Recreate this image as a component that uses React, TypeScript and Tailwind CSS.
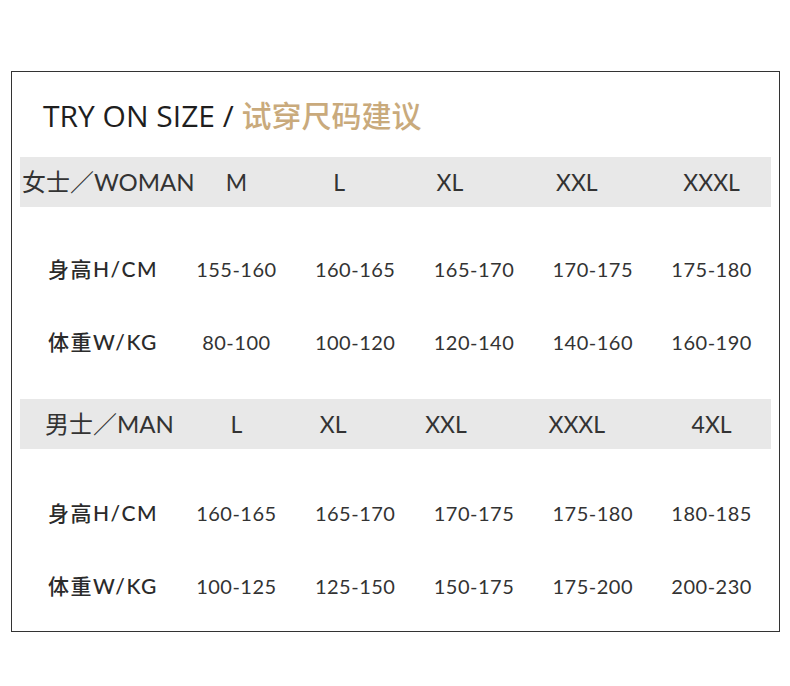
import React from 'react';

type Cell = { t: string; c?: string };

const womanHead: Cell[] = [
  { t: 'M' },
  { t: 'L', c: 'pr-8' },
  { t: 'XL', c: 'pr-12' },
  { t: 'XXL', c: 'pr-8' },
  { t: 'XXXL' },
];

const manHead: Cell[] = [
  { t: 'L' },
  { t: 'XL', c: 'pr-11' },
  { t: 'XXL', c: 'pr-14' },
  { t: 'XXXL', c: 'pr-8' },
  { t: '4XL' },
];

const womanRows = [
  { label: '身高H/CM', values: ['155-160', '160-165', '165-170', '170-175', '175-180'] },
  { label: '体重W/KG', values: ['80-100', '100-120', '120-140', '140-160', '160-190'] },
];

const manRows = [
  { label: '身高H/CM', values: ['160-165', '165-170', '170-175', '175-180', '180-185'] },
  { label: '体重W/KG', values: ['100-125', '125-150', '150-175', '175-200', '200-230'] },
];

const font = "font-['Lato','Noto_Sans_CJK_SC',sans-serif]";

function HeadBar({ label, labelPad, cells }: { label: string; labelPad: string; cells: Cell[] }) {
  return (
    <div className="grid h-[50px] grid-cols-[157px_repeat(5,1fr)] items-center bg-[#e8e8e8] text-[#333]">
      <div className={`whitespace-nowrap text-[24px] ${labelPad}`}>{label}</div>
      {cells.map((cell, i) => (
        <div key={i} className={`text-center text-[23px] ${cell.c ?? ''}`}>
          {cell.t}
        </div>
      ))}
    </div>
  );
}

function DataRows({ rows }: { rows: { label: string; values: string[] }[] }) {
  return (
    <div className="flex flex-col">
      {rows.map((row, ri) => (
        <div key={ri} className="grid h-[73px] grid-cols-[157px_repeat(5,1fr)] items-center text-[#333]">
          <div className="whitespace-nowrap pl-[28px] text-[21px] font-medium tracking-[1.5px] text-[#2b2b2b]">
            {row.label}
          </div>
          {row.values.map((v, i) => (
            <div key={i} className="text-center text-[20px] tracking-[0.5px]">
              {v}
            </div>
          ))}
        </div>
      ))}
    </div>
  );
}

export default function App() {
  return (
    <div className={`h-[686px] w-[790px] bg-white pl-[11px] pt-[71px] ${font}`}>
      <div className="flex h-[561px] w-[769px] flex-col border border-[#333] px-2">
        <div className="flex h-[85px] items-center pl-[23px] pt-[1px] font-['Open_Sans','Noto_Sans_CJK_SC',sans-serif] text-[30px] font-medium">
          <span className="text-[#1e1e1e]">TRY ON SIZE /&nbsp;</span>
          <span className="text-[#c9aa7c]">试穿尺码建议</span>
        </div>

        <HeadBar label="女士／WOMAN" labelPad="pl-[2px]" cells={womanHead} />
        <div className="pt-[25px] pb-[21px]">
          <DataRows rows={womanRows} />
        </div>

        <HeadBar label="男士／MAN" labelPad="pl-[25px]" cells={manHead} />
        <div className="pt-[27px]">
          <DataRows rows={manRows} />
        </div>
      </div>
    </div>
  );
}
